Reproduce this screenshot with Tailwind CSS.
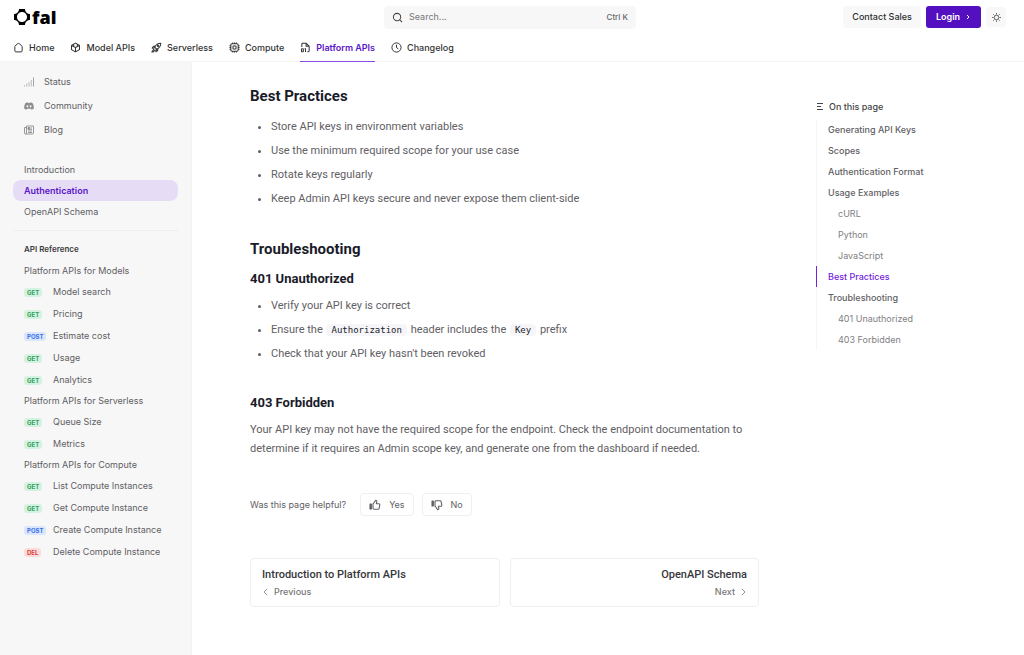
<!DOCTYPE html>
<html lang="en">
<head>
    <meta charset="UTF-8">
    <meta name="viewport" content="width=device-width, initial-scale=1.0">
    <title>Authentication - fal</title>
    <script src="https://cdn.jsdelivr.net/npm/@tailwindcss/browser@4"></script>
</head>
<body class="flex min-h-screen flex-col bg-white font-['Inter',sans-serif] text-[#5f6064]">

<header>
    <div class="flex h-[34px] items-center px-[14px]">
        <div class="flex flex-1">
            <a href="#" class="flex items-center gap-[2px] text-black" aria-label="fal home">
                <svg class="h-4 w-4" viewBox="0 0 16 16" fill="currentColor" fill-rule="evenodd"><path d="M5 0h6c0 2.800 2.200 5 5 5v6c-2.800 0-5 2.200-5 5H5c0-2.800-2.200-5-5-5V5c2.800 0 5-2.200 5-5Z M8 3C5.200 3 3 5.200 3 8s2.200 5 5 5 5-2.200 5-5-2.200-5-5-5Z"/></svg>
                <span class="font-['Open_Sans',sans-serif] text-[18px] leading-5 font-extrabold">fal</span>
            </a>
        </div>
        <label class="flex h-[23px] w-1/4 min-w-[252px] items-center gap-[6px] rounded-sm bg-[#f7f7f7] px-2">
            <svg class="h-[11px] w-[11px] text-[#444]" viewBox="0 0 24 24" fill="none" stroke="currentColor" stroke-width="2.200"><circle cx="11" cy="11" r="8"/><path d="m17 17 5 5"/></svg>
            <input type="text" placeholder="Search..." aria-label="Search" class="min-w-0 flex-1 text-[9px] outline-none placeholder:text-[#777]">
            <kbd class="font-['Inter',sans-serif] text-[8px] font-medium text-[#666]">Ctrl K</kbd>
        </label>
        <div class="flex flex-1 items-center justify-end gap-[5px] pr-1">
            <a href="#" class="flex h-[22px] items-center rounded-sm bg-[#f8f8f8] px-[9px] text-[9px] font-medium text-[#2e2e30]">Contact Sales</a>
            <a href="#" class="flex h-[22px] items-center gap-1 rounded-[3px] bg-[#5410c0] pr-[9px] pl-[10px] text-[9px] font-semibold text-white">Login
                <svg class="h-2 w-2" viewBox="0 0 8 8" fill="none" stroke="currentColor"><path d="m3 2 2 2-2 2"/></svg>
            </a>
            <button class="flex h-5 w-5 items-center justify-center rounded-sm bg-[#f8f8f8] text-[#555]" aria-label="Toggle theme">
                <svg class="h-[9px] w-[9px]" viewBox="0 0 18 18" fill="none" stroke="currentColor" stroke-width="1.800"><circle cx="9" cy="9" r="4.500"/><path d="M9 0v3M9 15v3M0 9h3M15 9h3M2.600 2.600l2.200 2.200M13.200 13.200l2.200 2.200M15.400 2.600l-2.200 2.200M4.800 13.200l-2.200 2.200"/></svg>
            </button>
        </div>
    </div>

    <nav class="flex h-7 gap-4 border-b border-[#f4f4f4] px-[13px] text-[9px] font-medium text-[#333]">
        <a href="#" class="flex items-center gap-[5px]">
            <svg class="h-[11px] w-[11px]" viewBox="0 0 18 18" fill="none" stroke="currentColor" stroke-width="1.600"><path d="M3 7.500v7c0 1 .7 1.700 1.700 1.700h8.600c1 0 1.700-.7 1.700-1.700v-7c0-.6-.3-1-.7-1.400L10.100 2.600c-.7-.5-1.500-.5-2.200 0L3.700 6.100c-.4.4-.7.8-.7 1.400Z"/></svg>
            Home
        </a>
        <a href="#" class="flex items-center gap-[5px]">
            <svg class="h-[11px] w-[11px]" viewBox="0 0 18 18" fill="none" stroke="currentColor" stroke-width="1.700" stroke-linejoin="round"><path d="M9 1.800 15.500 5.500v7L9 16.200l-6.500-3.700v-7ZM2.500 5.500 9 9l6.500-3.500M9 9v7M6 3.500v3.700M12 3.500v3.700"/></svg>
            Model APIs
        </a>
        <a href="#" class="flex items-center gap-[5px]">
            <svg class="h-[11px] w-[11px]" viewBox="0 0 18 18" fill="none" stroke="currentColor" stroke-width="1.700" stroke-linejoin="round"><path d="M16 2c-5 0-8 2.500-10 6.500L9.500 12C13.500 10 16 7 16 2ZM7 7H4L2 10l4-.5M11 11v3l-3 2 .5-4M5 11l-4 6M7 13l-4 4"/><circle cx="11.500" cy="6.500" r="1"/></svg>
            Serverless
        </a>
        <a href="#" class="flex items-center gap-[5px]">
            <svg class="h-[11px] w-[11px]" viewBox="0 0 18 18" fill="none" stroke="currentColor" stroke-width="1.700"><rect x="3" y="3" width="12" height="12" rx="2"/><rect x="6.500" y="6.500" width="5" height="5" rx="1"/><path d="M6 3V.7M9 3V.7M12 3V.7M6 17.300V15M9 17.300V15M12 17.300V15M3 6H.7M3 9H.7M3 12H.7M17.300 6H15M17.300 9H15M17.300 12H15"/></svg>
            Compute
        </a>
        <a href="#" class="-mb-px flex items-center gap-[5px] border-b border-[#8a4be8] font-semibold text-[#5b16c8]">
            <svg class="h-[11px] w-[11px] text-[#333]" viewBox="0 0 18 18" fill="none" stroke="currentColor" stroke-width="1.700"><path d="M3 8V3.500C3 2.500 3.500 2 4.500 2H10l5 5v7.500c0 1-.5 1.500-1.500 1.500H12M10 2v5h5"/><rect x="2.500" y="11" width="3" height="5" rx="1"/><path d="M7.500 11H9v5.500"/></svg>
            Platform APIs
        </a>
        <a href="#" class="flex items-center gap-[5px]">
            <svg class="h-[11px] w-[11px]" viewBox="0 0 18 18" fill="none" stroke="currentColor" stroke-width="1.600"><circle cx="9" cy="9" r="7.500"/><path d="M9 4.500V9l3 2.500"/></svg>
            Changelog
        </a>
    </nav>
</header>

<div class="flex flex-1">
    <aside class="w-3/16 min-w-[192px] shrink-0 border-r border-[#f2f2f2] bg-[#f7f7f7] px-[13px] py-2 text-[9px]">
        <ul>
            <li>
                <a href="#" class="flex h-6 items-center gap-[10px] px-[11px]">
                    <svg class="h-[10px] w-[10px] text-[#999]" viewBox="0 0 20 20" stroke="currentColor" stroke-width="1.800"><path d="M1 19v-3M5.500 19v-6M10 19V10M14.500 19V6" opacity=".7"/><path d="M19 19V1"/></svg>
                    Status
                </a>
            </li>
            <li>
                <a href="#" class="flex h-6 items-center gap-[10px] px-[11px]">
                    <svg class="h-[10px] w-[10px] text-[#8d8d8d]" viewBox="0 0 20 20" fill="currentColor" fill-rule="evenodd"><path d="M7.500 2.500 3 4C1 7.500 0 11 .3 15c1.500 1.300 3 2 4.700 2.500L6.200 15.500h7.600l1.200 2c1.700-.5 3.200-1.200 4.700-2.500C20 11 19 7.500 17 4l-4.500-1.500-.7 1.300H8.200ZM6.800 8.700a1.900 2 0 1 0 .1 0ZM13.200 8.700a1.900 2 0 1 0 .1 0Z"/></svg>
                    Community
                </a>
            </li>
            <li>
                <a href="#" class="flex h-6 items-center gap-[10px] px-[11px]">
                    <svg class="h-[10px] w-[10px] text-[#8d8d8d]" viewBox="0 0 20 20" fill="none" stroke="currentColor" stroke-width="1.800"><path d="M5 2h14v14c0 1-.7 2-2 2H3c-1.300 0-2-1-2-2V5h4M5 2v14c0 1-.7 2-2 2M8 12h8M8 15h8M13 6h3M13 9h3"/><path d="M8 5h3.500v4H8Z" fill="currentColor"/></svg>
                    Blog
                </a>
            </li>
        </ul>

        <ul class="mt-[17px] border-b border-[#eeeeee] pb-2">
            <li><a href="#" class="flex h-[21px] items-center px-[11px]">Introduction</a></li>
            <li><a href="#" class="flex h-[21px] items-center rounded-lg bg-[#e6dcf5] px-[11px] font-semibold text-[#5b16c8]">Authentication</a></li>
            <li><a href="#" class="flex h-[21px] items-center px-[11px]">OpenAPI Schema</a></li>
        </ul>

        <h5 class="mt-3 px-[11px] text-[8px] leading-3 font-semibold text-[#3c3c3f]">API Reference</h5>
        <h6 class="mt-[6px] px-[11px] leading-5">Platform APIs for Models</h6>
        <ul>
            <li><a href="#" class="flex h-[22px] items-center px-[11px]"><span class="w-[29px]"><span class="rounded-[3px] bg-[#d5f2e0] px-[3px] py-px text-[6px] font-bold text-[#2f9e5b]">GET</span></span>Model search</a></li>
            <li><a href="#" class="flex h-[22px] items-center px-[11px]"><span class="w-[29px]"><span class="rounded-[3px] bg-[#d5f2e0] px-[3px] py-px text-[6px] font-bold text-[#2f9e5b]">GET</span></span>Pricing</a></li>
            <li><a href="#" class="flex h-[22px] items-center px-[11px]"><span class="w-[29px]"><span class="rounded-[3px] bg-[#d9e6fc] px-[3px] py-px text-[6px] font-bold text-[#3b6fe8]">POST</span></span>Estimate cost</a></li>
            <li><a href="#" class="flex h-[22px] items-center px-[11px]"><span class="w-[29px]"><span class="rounded-[3px] bg-[#d5f2e0] px-[3px] py-px text-[6px] font-bold text-[#2f9e5b]">GET</span></span>Usage</a></li>
            <li><a href="#" class="flex h-[22px] items-center px-[11px]"><span class="w-[29px]"><span class="rounded-[3px] bg-[#d5f2e0] px-[3px] py-px text-[6px] font-bold text-[#2f9e5b]">GET</span></span>Analytics</a></li>
        </ul>
        <h6 class="px-[11px] leading-5">Platform APIs for Serverless</h6>
        <ul>
            <li><a href="#" class="flex h-[22px] items-center px-[11px]"><span class="w-[29px]"><span class="rounded-[3px] bg-[#d5f2e0] px-[3px] py-px text-[6px] font-bold text-[#2f9e5b]">GET</span></span>Queue Size</a></li>
            <li><a href="#" class="flex h-[22px] items-center px-[11px]"><span class="w-[29px]"><span class="rounded-[3px] bg-[#d5f2e0] px-[3px] py-px text-[6px] font-bold text-[#2f9e5b]">GET</span></span>Metrics</a></li>
        </ul>
        <h6 class="px-[11px] leading-5">Platform APIs for Compute</h6>
        <ul>
            <li><a href="#" class="flex h-[22px] items-center px-[11px]"><span class="w-[29px]"><span class="rounded-[3px] bg-[#d5f2e0] px-[3px] py-px text-[6px] font-bold text-[#2f9e5b]">GET</span></span>List Compute Instances</a></li>
            <li><a href="#" class="flex h-[22px] items-center px-[11px]"><span class="w-[29px]"><span class="rounded-[3px] bg-[#d5f2e0] px-[3px] py-px text-[6px] font-bold text-[#2f9e5b]">GET</span></span>Get Compute Instance</a></li>
            <li><a href="#" class="flex h-[22px] items-center px-[11px]"><span class="w-[29px]"><span class="rounded-[3px] bg-[#d9e6fc] px-[3px] py-px text-[6px] font-bold text-[#3b6fe8]">POST</span></span>Create Compute Instance</a></li>
            <li><a href="#" class="flex h-[22px] items-center px-[11px]"><span class="w-[29px]"><span class="rounded-[3px] bg-[#fbdcdc] px-[3px] py-px text-[6px] font-bold text-[#d93c3c]">DEL</span></span>Delete Compute Instance</a></li>
        </ul>
    </aside>

    <div class="flex flex-1 pl-[58px]">
        <main class="max-w-[509px] flex-1 pt-6 font-['Roboto',sans-serif] text-[11px]">
            <h2 class="text-[15px] leading-5 font-bold text-[#1a1b29]">Best Practices</h2>
            <ul class="mt-[9px] list-disc pl-[21px] leading-6">
                <li>Store API keys in environment variables</li>
                <li>Use the minimum required scope for your use case</li>
                <li>Rotate keys regularly</li>
                <li>Keep Admin API keys secure and never expose them client-side</li>
            </ul>

            <h2 class="mt-7 text-[15px] leading-5 font-bold text-[#1a1b29]">Troubleshooting</h2>
            <h3 class="mt-[10px] text-[13px] leading-5 font-bold text-[#1a1b29]">401 Unauthorized</h3>
            <ul class="mt-[5px] list-disc pl-[21px] leading-6">
                <li>Verify your API key is correct</li>
                <li>Ensure the <code class="mx-px rounded-sm bg-[#f6f6f9] px-[5px] py-px font-['DejaVu_Sans_Mono',monospace] text-[9px] leading-none text-[#1a1b29]">Authorization</code> header includes the <code class="mx-px rounded-sm bg-[#f6f6f9] px-[5px] py-px font-['DejaVu_Sans_Mono',monospace] text-[9px] leading-none text-[#1a1b29]">Key</code> prefix</li>
                <li>Check that your API key hasn't been revoked</li>
            </ul>

            <h3 class="mt-[27px] text-[13px] leading-5 font-bold text-[#1a1b29]">403 Forbidden</h3>
            <p class="mt-[7px] leading-[19px]">Your API key may not have the required scope for the endpoint. Check the endpoint documentation to determine if it requires an Admin scope key, and generate one from the dashboard if needed.</p>

            <div class="mt-[35px] flex items-center font-['Inter',sans-serif] text-[9px]">
                <p class="mr-[14px]">Was this page helpful?</p>
                <button class="mr-2 flex h-[23px] items-center gap-2 rounded-sm border border-[#efefef] px-2">
                    <svg class="h-3 w-3" viewBox="0 0 18 18" fill="none" stroke="currentColor" stroke-width="1.600" stroke-linejoin="round"><path d="M6 14V8c0-.6.200-1 .500-1.300L10 2c1.500 0 2 1 1.700 2.300L11 7h3.700c1 0 1.700.9 1.500 1.900l-1 5c-.2.800-.9 1.400-1.700 1.400H8c-1 0-2-.5-2-1.300Z"/><path d="M1.500 7.500h2V15h-2Z" fill="currentColor"/></svg>
                    Yes
                </button>
                <button class="flex h-[23px] items-center gap-2 rounded-sm border border-[#efefef] px-2">
                    <svg class="h-3 w-3" viewBox="0 0 18 18" fill="none" stroke="currentColor" stroke-width="1.600" stroke-linejoin="round"><path d="M6 4v6c0 .6.200 1 .500 1.300L10 16c1.500 0 2-1 1.700-2.300L11 11h3.700c1 0 1.700-.9 1.500-1.900l-1-5c-.2-.8-.9-1.400-1.700-1.400H8c-1 0-2 .5-2 1.300Z"/><path d="M1.500 3h2v7.500h-2Z" fill="currentColor"/></svg>
                    No
                </button>
            </div>

            <div class="mt-[42px] grid grid-cols-2 gap-[10px]">
                <a href="#" class="flex h-[49px] flex-col justify-center rounded-sm border border-[#efefef] px-[11px]">
                    <span class="leading-[18px] font-medium text-[#37373b]">Introduction to Platform APIs</span>
                    <span class="flex items-center gap-1 font-['Inter',sans-serif] text-[9px] leading-4 font-medium text-[#777]">
                        <svg class="h-2 w-2" viewBox="0 0 8 8" fill="none" stroke="#999"><path d="M5 1 2 4l3 3"/></svg>
                        Previous
                    </span>
                </a>
                <a href="#" class="flex h-[49px] flex-col items-end justify-center rounded-sm border border-[#efefef] px-[11px]">
                    <span class="leading-[18px] font-medium text-[#37373b]">OpenAPI Schema</span>
                    <span class="flex items-center gap-1 font-['Inter',sans-serif] text-[9px] leading-4 font-medium text-[#777]">
                        Next
                        <svg class="h-2 w-2" viewBox="0 0 8 8" fill="none" stroke="#999"><path d="m3 1 3 3-3 3"/></svg>
                    </span>
                </a>
            </div>
        </main>

        <nav class="ml-[57px] w-[150px] shrink-0 pt-[34px] text-[9px]">
            <h4 class="flex h-[21px] items-center gap-[5px] font-medium text-[#444]">
                <svg class="h-2 w-2" viewBox="0 0 8 8" fill="none" stroke="currentColor"><path d="M1 .500h6M1 3.500h4M1 6.500h6"/></svg>
                On this page
            </h4>
            <ul class="mt-[2px] border-l border-[#f5f5f5] leading-[21px]">
                <li class="pl-[11px] font-medium"><a href="#">Generating API Keys</a></li>
                <li class="pl-[11px] font-medium"><a href="#">Scopes</a></li>
                <li class="pl-[11px] font-medium"><a href="#">Authentication Format</a></li>
                <li class="pl-[11px] font-medium"><a href="#">Usage Examples</a></li>
                <li class="pl-[21px] text-[#808083]"><a href="#">cURL</a></li>
                <li class="pl-[21px] text-[#808083]"><a href="#">Python</a></li>
                <li class="pl-[21px] text-[#808083]"><a href="#">JavaScript</a></li>
                <li class="-ml-px border-l border-[#7424dc] pl-[11px] font-medium text-[#7424dc]"><a href="#">Best Practices</a></li>
                <li class="pl-[11px] font-medium"><a href="#">Troubleshooting</a></li>
                <li class="pl-[21px] text-[#808083]"><a href="#">401 Unauthorized</a></li>
                <li class="pl-[21px] text-[#808083]"><a href="#">403 Forbidden</a></li>
            </ul>
        </nav>
    </div>
</div>

</body>
</html>
